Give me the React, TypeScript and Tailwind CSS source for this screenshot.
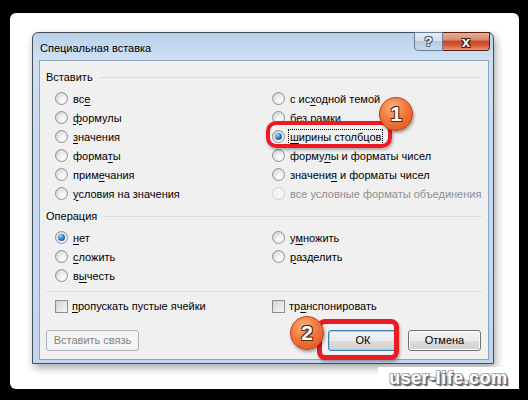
import React from "react";

type Item = { text: string; u?: number; checked?: boolean; disabled?: boolean; focus?: boolean };

const PASTE_LEFT: Item[] = [
  { text: "все", u: 2 },
  { text: "формулы", u: 0 },
  { text: "значения", u: 0 },
  { text: "форматы", u: 5 },
  { text: "примечания", u: 4 },
  { text: "условия на значения", u: 0 },
];

const PASTE_RIGHT: Item[] = [
  { text: "с исходной темой", u: 4 },
  { text: "без рамки" },
  { text: "ширины столбцов", u: 0, checked: true, focus: true },
  { text: "формулы и форматы чисел", u: 5 },
  { text: "значения и форматы чисел", u: 7 },
  { text: "все условные форматы объединения", disabled: true },
];

const OP_LEFT: Item[] = [
  { text: "нет", u: 0, checked: true },
  { text: "сложить", u: 0 },
  { text: "вычесть", u: 1 },
];

const OP_RIGHT: Item[] = [
  { text: "умножить", u: 1 },
  { text: "разделить", u: 0 },
];

function Acc({ text, u }: { text: string; u?: number }) {
  if (u === undefined) return <>{text}</>;
  return (
    <>
      {text.slice(0, u)}
      <span className="underline underline-offset-2">{text[u]}</span>
      {text.slice(u + 1)}
    </>
  );
}

function Radio({ checked, disabled }: { checked?: boolean; disabled?: boolean }) {
  return (
    <span
      className={`w-[13px] h-[13px] rounded-full border shrink-0 flex items-center justify-center ${
        disabled
          ? "border-[#cfd1d3] bg-[#f4f4f4]"
          : "border-[#8d9196] bg-[radial-gradient(circle_at_65%_70%,#ffffff_0%,#f0f0f0_35%,#c9cbcd_100%)]"
      }`}
    >
      {checked && (
        <span className="w-[7px] h-[7px] rounded-full bg-[radial-gradient(circle_at_35%_30%,#a9d4f7_0%,#3a7fc4_45%,#123e7a_100%)]" />
      )}
    </span>
  );
}

function Check() {
  return (
    <span className="w-[13px] h-[13px] border border-[#8e8f8f] shrink-0 bg-[linear-gradient(135deg,#c9cbcd,#f6f6f6)] p-[1px]">
      <span className="block w-full h-full bg-[linear-gradient(135deg,#d6d8da,#f4f4f4)]" />
    </span>
  );
}

function RadioRow({ item }: { item: Item }) {
  return (
    <div className="h-[19px] flex items-center gap-[4px]">
      <Radio checked={item.checked} disabled={item.disabled} />
      <span
        className={`leading-[14px] px-[1px] ${item.disabled ? "text-[#8f8f8f]" : "text-black"} ${
          item.focus ? "outline outline-1 outline-dotted outline-black outline-offset-0" : ""
        }`}
      >
        <Acc text={item.text} u={item.u} />
      </span>
    </div>
  );
}

function GroupLabel({ label }: { label: string }) {
  return (
    <div className="h-[16px] flex items-center gap-[6px] pr-[6px]">
      <span className="text-black">{label}</span>
      <div className="flex-1 h-px bg-[#d5dfe5]" />
    </div>
  );
}

function Btn({ children, w, def, disabled }: { children: React.ReactNode; w: string; def?: boolean; disabled?: boolean }) {
  return (
    <div
      className={`${w} h-[21px] rounded-[3px] border flex items-center justify-center ${
        disabled
          ? "border-[#adb2b5] bg-[#f4f4f4] text-[#838383]"
          : def
          ? "border-[#3c7fb1] bg-[linear-gradient(to_bottom,#f2f2f2_0%,#ebebeb_50%,#dddddd_51%,#cfcfcf_100%)] shadow-[inset_0_0_0_1px_#9fd2f2] text-black"
          : "border-[#707070] bg-[linear-gradient(to_bottom,#f2f2f2_0%,#ebebeb_50%,#dddddd_51%,#cfcfcf_100%)] shadow-[inset_0_0_0_1px_#fcfcfc] text-black"
      }`}
    >
      {children}
    </div>
  );
}

function Badge({ n, className }: { n: string; className: string }) {
  return (
    <div
      className={`absolute w-[34px] h-[34px] rounded-full border border-[#c63c14] bg-[radial-gradient(circle_at_40%_30%,#fbb27c_0%,#f2783f_45%,#d94c19_100%)] shadow-[1px_2px_3px_rgba(0,0,0,0.35)] flex items-center justify-center text-white font-bold text-[21px] font-['Liberation_Sans',Arial,sans-serif] [text-shadow:1px_1px_0_#5a2a10,-1px_-1px_0_#5a2a10,1px_-1px_0_#5a2a10,-1px_1px_0_#5a2a10] ${className}`}
    >
      {n}
    </div>
  );
}

export default function App() {
  return (
    <div className="relative w-[528px] h-[400px] bg-black overflow-hidden pt-[13px] pl-[10px] font-['Liberation_Sans',Arial,sans-serif] text-[11px]">
      {/* white screenshot card */}
      <div className="w-[509px] h-[376px] bg-white rounded-[6px] pt-[19px] pl-[22px]">
        {/* dialog window */}
        <div className="w-[462px] h-[332px] rounded-t-[6px] border border-[#474d55] bg-[linear-gradient(to_bottom,#b9d1ea_0%,#cfe0f2_8%,#c6daf0_30%,#c2d7ee_100%)] shadow-[2px_4px_9px_rgba(0,0,0,0.35)] flex flex-col">
          {/* title bar */}
          <div className="h-[27px] flex items-start justify-between">
            <span className="pl-[7px] pt-[8px] leading-[14px] text-black">Специальная вставка</span>
            <div className="flex mr-[3px] -mt-px">
              <div className="w-[29px] h-[19px] border border-[#6d7f96] rounded-bl-[4px] bg-[linear-gradient(to_bottom,#e3ebf5_0%,#d3dfed_45%,#b7c9de_50%,#c8d8ea_100%)] flex items-center justify-center text-[#f5f7fa] font-bold text-[13px] [text-shadow:1px_1px_0_#4a5868,-1px_-1px_0_#4a5868,1px_-1px_0_#4a5868,-1px_1px_0_#4a5868]">
                ?
              </div>
              <div className="w-[47px] h-[19px] border border-[#5a1f14] border-l-0 rounded-br-[4px] bg-[linear-gradient(to_bottom,#e6b196_0%,#d88a6a_40%,#c7442a_50%,#d85d3a_75%,#e49a78_100%)] flex items-center justify-center text-white font-bold text-[15px] leading-none [text-shadow:1px_1px_0_#3b1a14,-1px_-1px_0_#3b1a14,1px_-1px_0_#3b1a14,-1px_1px_0_#3b1a14]">
                x
              </div>
            </div>
          </div>

          {/* client panel */}
          <div className="ml-[6px] mr-[4px] mb-[3px] flex-1 border border-[#8fa3bb] bg-[#f0f0f0] pl-[6px] pt-[8px] flex flex-col">
            <GroupLabel label="Вставить" />
            <div className="mt-[4px] pl-[9px] grid grid-cols-[217px_1fr]">
              <div>
                {PASTE_LEFT.map((it) => (
                  <RadioRow key={it.text} item={it} />
                ))}
              </div>
              <div>
                {PASTE_RIGHT.map((it) => (
                  <RadioRow key={it.text} item={it} />
                ))}
              </div>
            </div>

            <div className="mt-[5px]">
              <GroupLabel label="Операция" />
            </div>
            <div className="mt-[4px] pl-[9px] grid grid-cols-[217px_1fr]">
              <div>
                {OP_LEFT.map((it) => (
                  <RadioRow key={it.text} item={it} />
                ))}
              </div>
              <div>
                {OP_RIGHT.map((it) => (
                  <RadioRow key={it.text} item={it} />
                ))}
              </div>
            </div>

            <div className="mt-[6px] mr-[6px] h-px bg-[#d5dfe5]" />

            <div className="mt-[5px] pl-[9px] grid grid-cols-[217px_1fr]">
              <div className="h-[19px] flex items-center gap-[4px]">
                <Check />
                <span className="text-black">
                  <Acc text="пропускать пустые ячейки" u={0} />
                </span>
              </div>
              <div className="h-[19px] flex items-center gap-[4px]">
                <Check />
                <span className="text-black">
                  <Acc text="транспонировать" u={2} />
                </span>
              </div>
            </div>

            <div className="mt-[14px] pr-[7px] flex items-center">
              <Btn w="w-[93px]" disabled>
                Вставить связь
              </Btn>
              <div className="flex-1" />
              <Btn w="w-[70px]" def>
                ОК
              </Btn>
              <div className="w-[10px]" />
              <Btn w="w-[73px]">Отмена</Btn>
            </div>
          </div>
        </div>
      </div>

      {/* red highlight 1 */}
      <div className="absolute left-[266px] top-[121px] w-[126px] h-[27px] rounded-[10px] border-[4px] border-[#ea1b22] shadow-[1px_2px_3px_rgba(0,0,0,0.3)]" />
      <Badge n="1" className="left-[379px] top-[97px]" />

      {/* red highlight 2 */}
      <div className="absolute left-[317px] top-[319px] w-[82px] h-[41px] rounded-[8px] border-[5px] border-[#ea1b22] shadow-[1px_2px_3px_rgba(0,0,0,0.3)]" />
      <Badge n="2" className="left-[290px] top-[316px]" />

      {/* watermark */}
      <div className="absolute left-[378px] top-[367px] w-[141px] h-[22px] bg-white flex items-center justify-center">
        <span className="text-white font-bold text-[18px] tracking-[0.5px] [text-shadow:1px_1px_0_#6e6e6e,-1px_-1px_0_#b4b4b4,1px_-1px_0_#9a9a9a,-1px_1px_0_#9a9a9a,2px_2px_1px_#555]">
          user-life.com
        </span>
      </div>
    </div>
  );
}
